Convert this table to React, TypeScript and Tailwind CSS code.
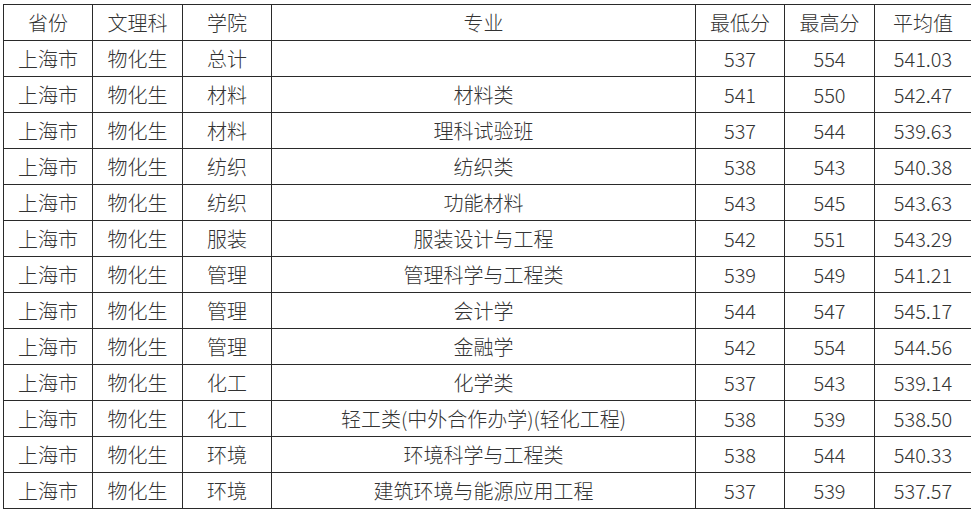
import React from "react";

const rows: string[][] = [
  ["上海市", "物化生", "总计", "", "537", "554", "541.03"],
  ["上海市", "物化生", "材料", "材料类", "541", "550", "542.47"],
  ["上海市", "物化生", "材料", "理科试验班", "537", "544", "539.63"],
  ["上海市", "物化生", "纺织", "纺织类", "538", "543", "540.38"],
  ["上海市", "物化生", "纺织", "功能材料", "543", "545", "543.63"],
  ["上海市", "物化生", "服装", "服装设计与工程", "542", "551", "543.29"],
  ["上海市", "物化生", "管理", "管理科学与工程类", "539", "549", "541.21"],
  ["上海市", "物化生", "管理", "会计学", "544", "547", "545.17"],
  ["上海市", "物化生", "管理", "金融学", "542", "554", "544.56"],
  ["上海市", "物化生", "化工", "化学类", "537", "543", "539.14"],
  ["上海市", "物化生", "化工", "轻工类(中外合作办学)(轻化工程)", "538", "539", "538.50"],
  ["上海市", "物化生", "环境", "环境科学与工程类", "538", "544", "540.33"],
  ["上海市", "物化生", "环境", "建筑环境与能源应用工程", "537", "539", "537.57"],
];

const header = ["省份", "文理科", "学院", "专业", "最低分", "最高分", "平均值"];
const widths = [89, 90, 89, 424, 89, 90, 97];

export default function App() {
  return (
    <div
      className="w-[971px] h-[509px] bg-white pt-[4px] pl-[3px] overflow-hidden text-[#333]"
      style={{ fontFamily: '"Microsoft YaHei", "Noto Sans CJK SC", "Noto Sans", sans-serif' }}
    >
      <table className="table-fixed border-collapse w-[968px] text-[20px] leading-none font-light">
        <colgroup>
          {widths.map((w, i) => (
            <col key={i} style={{ width: w }} />
          ))}
        </colgroup>
        <tbody>
          <tr className="h-[36px]">
            {header.map((h, i) => (
              <td key={i} className="border border-[#2a2a2a] text-center p-0 align-middle">
                {h}
              </td>
            ))}
          </tr>
          {rows.map((r, ri) => (
            <tr key={ri} className="h-[36px]">
              {r.map((c, ci) => (
                <td key={ci} className="border border-[#2a2a2a] text-center p-0 align-middle whitespace-nowrap">
                  {c}
                </td>
              ))}
            </tr>
          ))}
        </tbody>
      </table>
    </div>
  );
}
